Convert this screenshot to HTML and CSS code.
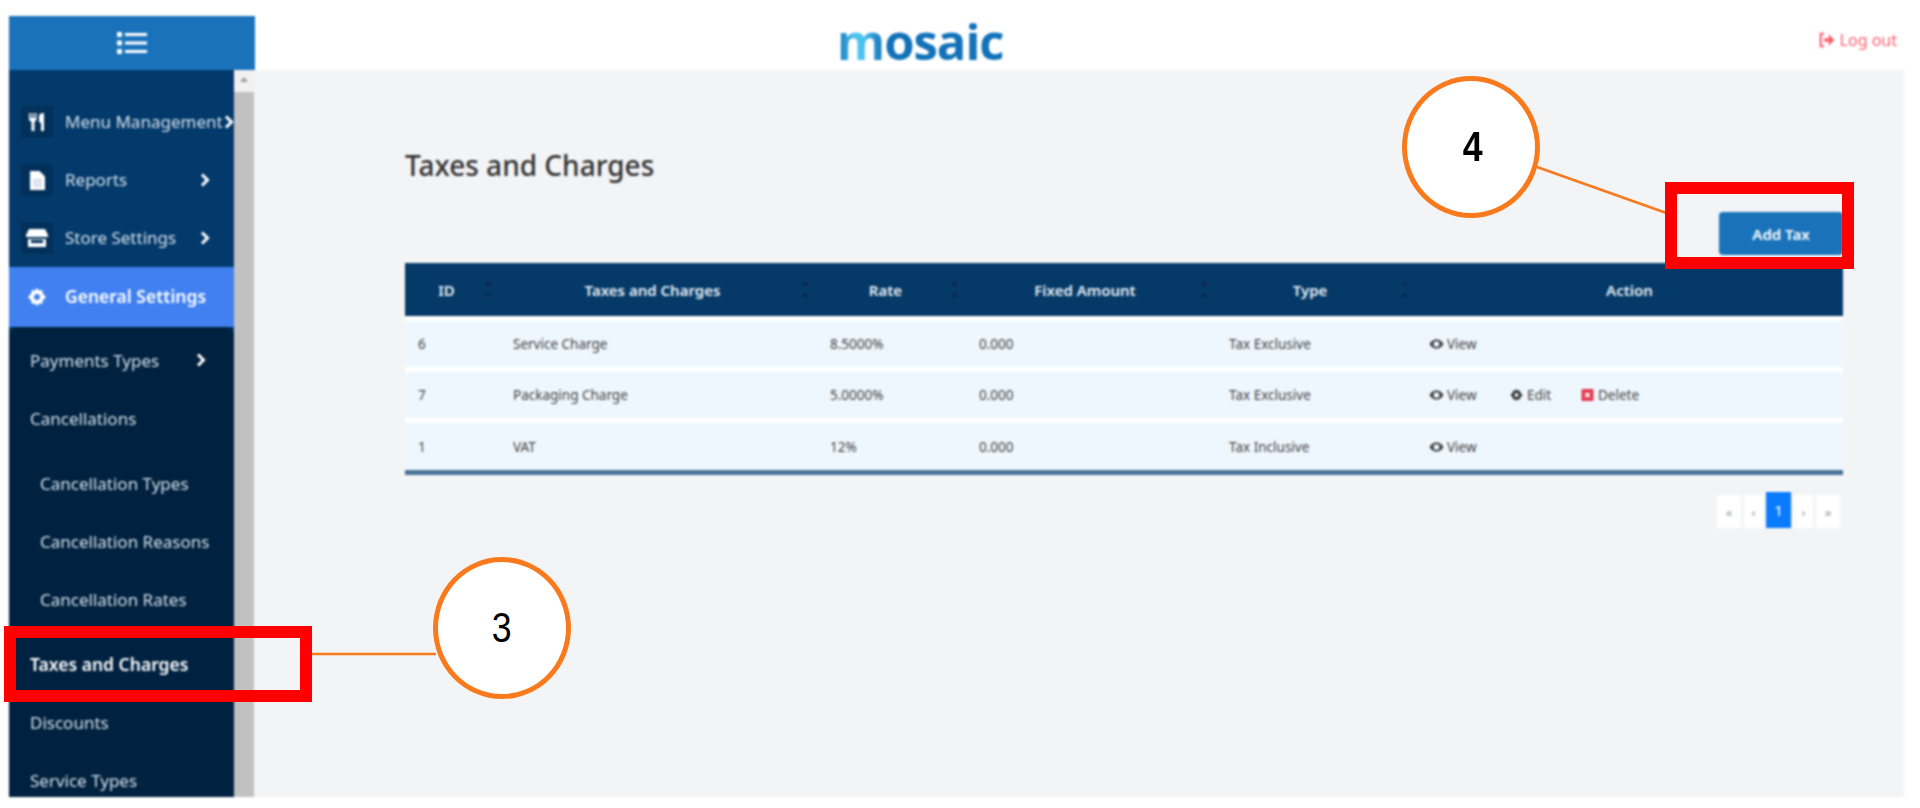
FILE: index.html
```html
<!DOCTYPE html>
<html lang="en">
<head>
  <meta charset="UTF-8" />
  <meta name="viewport" content="width=device-width, initial-scale=1.0" />
  <title>Taxes and Charges - Mosaic</title>
  <link rel="stylesheet" href="styles.css">
</head>
<body>
  <svg class="defs" width="0" height="0">
    <symbol id="chev" viewBox="0 0 10 14"><path d="M2 1.500 7.500 7 2 12.500" fill="none" stroke="currentColor" stroke-width="3"/></symbol>
    <symbol id="eye" viewBox="0 0 16 12"><path fill-rule="evenodd" d="M8 1C4.500 1 1.800 3.500.5 6 1.800 8.500 4.500 11 8 11s6.200-2.500 7.500-5C14.200 3.500 11.500 1 8 1zm0 2a3 3 0 1 1 0 6 3 3 0 0 1 0-6z" fill="currentColor"/></symbol>
  </svg>

  <div class="app">
    <header class="topbar">
      <div class="toggle">
        <svg width="32" height="26" viewBox="0 0 32 26" fill="#fff"><rect x="1" y="2" width="5" height="5" rx="1"/><rect x="1" y="10.500" width="5" height="5" rx="1"/><rect x="1" y="19" width="5" height="5" rx="1"/><rect x="9" y="3" width="22" height="3"/><rect x="9" y="11.500" width="22" height="3"/><rect x="9" y="20" width="22" height="3"/></svg>
      </div>
      <div class="logo"><span class="logo-m">m</span>osaic</div>
      <a class="logout">
        <svg width="18" height="16" viewBox="0 0 15 14"><path d="M5 1.500H2v11h3" fill="none" stroke="currentColor" stroke-width="1.800"/><path d="M5 5.500h4V2l5 5-5 5V8.500H5z" fill="currentColor"/></svg>
        Log out
      </a>
    </header>

    <div class="body">
      <nav class="sidebar">
        <div class="side-scroll">
          <ul class="menu">
            <li class="menu-item">
              <span class="tile"><svg width="16" height="18" viewBox="0 0 16 18" fill="#fff"><path d="M0 0h1.500v5H3V0h1.500v5H6V0h1.500v7L5.500 9v9h-3V9L0 7zM10 9V3c0-2 2-3 5-3v18h-3v-8z"/></svg></span>
              <span class="label">Menu Management</span>
              <svg class="chev"><use href="#chev"/></svg>
            </li>
            <li class="menu-item">
              <span class="tile"><svg width="15" height="19" viewBox="0 0 15 19"><path d="M0 0h9.500L15 5.500V19H0z" fill="#fff"/><path d="M3 9h9M3 12h9M3 15h9" stroke="#9fb2c6" stroke-width="1.200"/></svg></span>
              <span class="label">Reports</span>
              <svg class="chev"><use href="#chev"/></svg>
            </li>
            <li class="menu-item">
              <span class="tile"><svg width="22" height="18" viewBox="0 0 22 18"><path d="M3 0h16l3 6v2H0V6z" fill="#fff"/><path d="M2 10h18v8H2z" fill="#fff"/><path d="M5 11h12v3H5z" fill="#03305a"/></svg></span>
              <span class="label">Store Settings</span>
              <svg class="chev"><use href="#chev"/></svg>
            </li>
            <li class="menu-item active">
              <span class="tile"><svg width="18" height="18" viewBox="0 0 18 18"><path fill-rule="evenodd" d="M9 0l2 2.500 3.200-.4.400 3.200L18 9l-3.400 3.700-.4 3.200-3.200-.4L9 18l-2-2.500-3.200.4-.4-3.200L0 9l3.400-3.700.4-3.200 3.200.4zm0 6a3 3 0 1 0 0 6 3 3 0 0 0 0-6z" fill="#fff"/></svg></span>
              <span class="label">General Settings</span>
            </li>
          </ul>
          <ul class="submenu">
            <li class="sub-item">
              <span class="label">Payments Types</span>
              <svg class="chev"><use href="#chev"/></svg>
            </li>
            <li class="sub-item">Cancellations</li>
            <li>
              <ul class="nested">
                <li class="sub-item">Cancellation Types</li>
                <li class="sub-item">Cancellation Reasons</li>
                <li class="sub-item">Cancellation Rates</li>
              </ul>
            </li>
            <li class="sub-item current">Taxes and Charges</li>
            <li class="sub-item">Discounts</li>
            <li class="sub-item">Service Types</li>
          </ul>
        </div>
        <div class="scrollbar"><span class="scroll-up"></span></div>
      </nav>

      <main class="content">
        <div class="page-head">
          <h1>Taxes and Charges</h1>
          <button class="btn-add" type="button">Add Tax</button>
        </div>

        <table class="tax-table">
          <colgroup>
            <col class="col-id"><col class="col-name"><col class="col-rate"><col class="col-fixed"><col class="col-type"><col>
          </colgroup>
          <thead>
            <tr>
              <th class="sort">ID</th>
              <th class="sort">Taxes and Charges</th>
              <th class="sort">Rate</th>
              <th class="sort">Fixed Amount</th>
              <th class="sort">Type</th>
              <th class="plain">Action</th>
            </tr>
          </thead>
          <tbody>
            <tr>
              <td>6</td><td>Service Charge</td><td>8.5000%</td><td>0.000</td><td>Tax Exclusive</td>
              <td><div class="actions"><a class="act-view"><svg class="ico"><use href="#eye"/></svg>View</a></div></td>
            </tr>
            <tr>
              <td>7</td><td>Packaging Charge</td><td>5.0000%</td><td>0.000</td><td>Tax Exclusive</td>
              <td>
                <div class="actions">
                  <a class="act-view"><svg class="ico"><use href="#eye"/></svg>View</a>
                  <a class="act-edit"><svg class="ico" viewBox="0 0 18 18"><path fill-rule="evenodd" d="M9 0l2 2.500 3.200-.4.400 3.200L18 9l-3.400 3.700-.4 3.200-3.200-.4L9 18l-2-2.500-3.200.4-.4-3.200L0 9l3.400-3.700.4-3.200 3.200.4zm0 6a3 3 0 1 0 0 6 3 3 0 0 0 0-6z" fill="#333"/></svg>Edit</a>
                  <a><svg class="ico" viewBox="0 0 14 14"><rect width="14" height="14" rx="1.500" fill="#e2384f"/><path d="M4.500 4.500l5 5m0-5l-5 5" stroke="#fff" stroke-width="2"/></svg>Delete</a>
                </div>
              </td>
            </tr>
            <tr>
              <td>1</td><td>VAT</td><td>12%</td><td>0.000</td><td>Tax Inclusive</td>
              <td><div class="actions"><a class="act-view"><svg class="ico"><use href="#eye"/></svg>View</a></div></td>
            </tr>
          </tbody>
        </table>

        <ul class="pager">
          <li>«</li>
          <li class="narrow">‹</li>
          <li class="on">1</li>
          <li class="narrow">›</li>
          <li>»</li>
        </ul>
      </main>
    </div>
  </div>

  <!-- callouts drawn over the screen -->
  <svg class="callout-lines" width="1920" height="808">
    <line x1="312" y1="654" x2="436" y2="654"/>
    <line x1="1537" y1="167" x2="1672" y2="215"/>
  </svg>
  <div class="redbox box-3"></div>
  <div class="redbox box-4"></div>
  <div class="bubble bubble-3"><span class="digit">3</span></div>
  <div class="bubble bubble-4"><span class="digit">4</span></div>
</body>
</html>
```

FILE: styles.css
```css
* {
  box-sizing: border-box;
}
html, body {
  height: 100%;
}
body {
  margin: 0;
  background-color: #fff;
  font-family: "Noto Sans", "Open Sans", sans-serif;
  color: #444;
  overflow: hidden;
}
ul {
  list-style: none;
  margin: 0;
  padding: 0;
}
.defs {
  position: absolute;
}
.app {
  height: 797px;
  margin: 0 16px 0 9px;
  padding-top: 16px;
  display: flex;
  flex-direction: column;
  filter: blur(0.9px);
}

/* top bar */
.topbar {
  height: 54px;
  display: flex;
  align-items: center;
  flex: none;
}
.toggle {
  width: 246px;
  height: 54px;
  background-color: #1a73ba;
  display: flex;
  align-items: center;
  justify-content: center;
}
.logo {
  margin: -4px 0 0 582px;
  font-family: "Open Sans", sans-serif;
  font-weight: 700;
  font-size: 49px;
  line-height: 54px;
  letter-spacing: -1px;
  color: #1271b8;
}
.logo-m {
  background: linear-gradient(90deg, #1271b8 0%, #4cc2f0 35%, #4cc2f0 55%, #1271b8 100%);
  -webkit-background-clip: text;
  background-clip: text;
  color: transparent;
}
.logout {
  margin: -6px 7px 0 auto;
  font-size: 16px;
  color: #f8606f;
  display: flex;
  align-items: center;
  gap: 4px;
}

.body {
  flex: 1;
  display: flex;
  min-height: 0;
}

/* sidebar */
.sidebar {
  width: 245px;
  flex: none;
  display: flex;
}
.side-scroll {
  width: 225px;
  background-color: #033a6b;
  color: #d5e0ea;
  font-size: 17px;
  overflow: hidden;
  padding-top: 23px;
}
.menu-item {
  height: 58px;
  display: flex;
  align-items: center;
  padding-left: 12px;
}
.menu-item .label {
  min-width: 132px;
  margin-left: 12px;
  padding-bottom: 2px;
  white-space: nowrap;
}
.tile {
  width: 32px;
  height: 32px;
  background-color: #03305a;
  display: flex;
  align-items: center;
  justify-content: center;
  flex: none;
}
.chev {
  width: 10px;
  height: 14px;
  margin-left: 3px;
  flex: none;
  color: #fff;
}
.menu-item.active {
  height: 60px;
  background-color: #4080f0;
  color: #fff;
  font-weight: 600;
  font-size: 17.500px;
}
.menu-item.active .tile {
  background-color: transparent;
}
.submenu {
  background-color: #00213f;
  border-radius: 8px 8px 0 0;
  padding-top: 4px;
  height: 500px;
}
.sub-item {
  height: 58px;
  display: flex;
  align-items: center;
  padding-left: 21px;
}
.sub-item .label {
  min-width: 161px;
}
.sub-item .chev {
  margin-left: 5px;
}
.nested {
  padding: 7px 0 7px 10px;
}
.sub-item.current {
  color: #fff;
  font-weight: 600;
  font-size: 17.500px;
}
.scrollbar {
  width: 20px;
  background-color: #c1c1c1;
}
.scroll-up {
  display: block;
  height: 22px;
  background-color: #f1f1f1;
  position: relative;
}
.scroll-up::after {
  content: "";
  position: absolute;
  left: 6px;
  top: 7px;
  border: 4px solid transparent;
  border-top: 0;
  border-bottom: 5px solid #a0a0a0;
}

/* main area */
.content {
  flex: 1;
  background-color: #f3f4f6;
  padding: 0 61px 0 151px;
}
.page-head {
  height: 193px;
  display: flex;
  justify-content: space-between;
  align-items: flex-start;
}
.page-head h1 {
  margin: 76px 0 0;
  font-size: 28px;
  font-weight: 500;
  color: #333;
}
.btn-add {
  margin-top: 142px;
  width: 124px;
  height: 43px;
  border: none;
  border-radius: 4px;
  background-color: #1a73ba;
  color: #fff;
  font-family: inherit;
  font-size: 15px;
  font-weight: 600;
}

.tax-table {
  width: 100%;
  table-layout: fixed;
  border-collapse: separate;
  border-spacing: 0;
  font-size: 13.500px;
}
.col-id { width: 95px; }
.col-name { width: 317px; }
.col-rate { width: 149px; }
.col-fixed { width: 250px; }
.col-type { width: 200px; }
.tax-table th {
  height: 53px;
  background-color: #053a68;
  color: #e8eff5;
  font-size: 15px;
  font-weight: 600;
  position: relative;
  padding: 0 12px 0 0;
}
.tax-table th.plain {
  padding-right: 0;
}
.tax-table th.sort::after {
  content: "";
  position: absolute;
  right: 8px;
  top: 19px;
  width: 7px;
  height: 15px;
  background:
    linear-gradient(45deg, transparent 50%, #0b2a50 50%) 0 0 / 4px 6px no-repeat,
    linear-gradient(-45deg, transparent 50%, #0b2a50 50%) 3px 0 / 4px 6px no-repeat,
    linear-gradient(135deg, transparent 50%, #0b2a50 50%) 0 100% / 4px 6px no-repeat,
    linear-gradient(-135deg, transparent 50%, #0b2a50 50%) 3px 100% / 4px 6px no-repeat;
}
.tax-table td {
  height: 51px;
  background-color: #eff7fe;
  border-top: 5px solid #fff;
  padding: 0 0 0 13px;
  vertical-align: middle;
}
.tax-table tbody tr:last-child td {
  height: 57px;
  border-bottom: 5px solid #4a7298;
}
.actions {
  display: flex;
  align-items: center;
}
.actions a {
  display: flex;
  align-items: center;
  gap: 3px;
}
.act-view { min-width: 80px; }
.act-edit { min-width: 71px; }
.ico {
  width: 15px;
  height: 12px;
  color: #444;
}

.pager {
  display: flex;
  justify-content: flex-end;
  gap: 3px;
  margin: 20px 3px 0 0;
  font-size: 13px;
  color: #999;
}
.pager li {
  width: 24px;
  height: 33px;
  background-color: #fff;
  display: flex;
  align-items: center;
  justify-content: center;
}
.pager .narrow {
  width: 19px;
}
.pager .on {
  width: 25px;
  height: 36px;
  margin-top: -3px;
  background-color: #0a7bff;
  color: #fff;
  font-size: 15px;
}

/* callouts */
.callout-lines {
  position: absolute;
  left: 0;
  top: 0;
  stroke: #f97a1c;
  stroke-width: 2.500;
}
.redbox {
  position: absolute;
  border: 12px solid #f00;
}
.box-3 {
  left: 4px;
  top: 626px;
  width: 308px;
  height: 76px;
}
.box-4 {
  left: 1665px;
  top: 182px;
  width: 189px;
  height: 87px;
}
.bubble {
  position: absolute;
  width: 138px;
  height: 142px;
  border: 5px solid #f97a1c;
  border-radius: 50%;
  background-color: #fff;
  color: #000;
  font-family: "Liberation Sans", sans-serif;
  font-size: 42px;
  display: flex;
  align-items: center;
  justify-content: center;
}
.digit {
  display: block;
  transform: scaleX(0.85);
}
.bubble-3 {
  left: 433px;
  top: 557px;
}
.bubble-4 {
  left: 1402px;
  top: 76px;
  padding-left: 4px;
  font-weight: 700;
}
```
